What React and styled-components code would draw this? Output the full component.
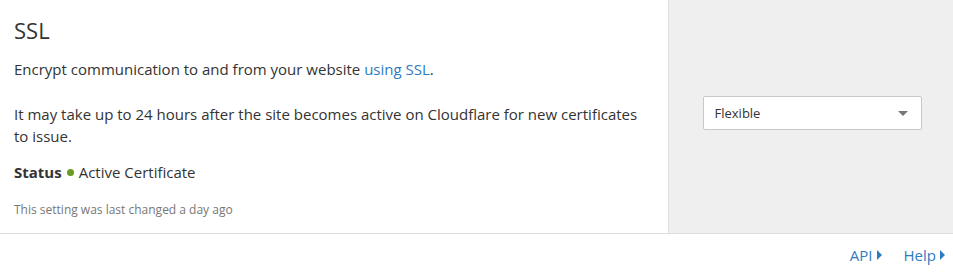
import React from 'react';
import styled, { createGlobalStyle } from 'styled-components';

const GlobalStyle = createGlobalStyle`
  body {
    margin: 0;
    background: #fff;
    font-family: "Open Sans", "Liberation Sans", sans-serif;
    color: #333;
  }
`;

const Card = styled.div`
  width: 953px;
`;

const Body = styled.div`
  display: flex;
  border-bottom: 1px solid #dedede;
  height: 233px;
`;

const Main = styled.div`
  width: 668px;
  padding: 15px 14px 0;
  box-sizing: border-box;
`;

const Title = styled.h2`
  margin: 0 0 13px;
  font-size: 22px;
  font-weight: 400;
  line-height: 30px;
  color: #333;
`;

const Text = styled.p`
  margin: 0 0 ${p => p.gap || 14}px;
  font-size: 15px;
  line-height: 22px;
  color: #333;
  max-width: 640px;
`;

const Link = styled.a`
  color: #2f7bbf;
  text-decoration: none;
`;

const Status = styled.div`
  display: flex;
  align-items: center;
  font-size: 15px;
  line-height: 22px;
  margin-bottom: 18px;

  strong {
    font-weight: 700;
  }
`;

const Dot = styled.span`
  width: 7px;
  height: 7px;
  border-radius: 50%;
  background: #6a9a20;
  margin: 0 5px 0 5px;
`;

const Note = styled.div`
  font-size: 12px;
  line-height: 18px;
  color: #777;
`;

const Side = styled.div`
  flex: 1;
  background: #efefef;
  border-left: 1px solid #dedede;
  display: flex;
  align-items: center;
  justify-content: center;
  padding-bottom: 7px;
  padding-left: 2px;
`;

const Select = styled.div`
  width: 219px;
  height: 34px;
  box-sizing: border-box;
  background: #fff;
  border: 1px solid #c8c8c8;
  border-radius: 2px;
  display: flex;
  align-items: center;
  justify-content: space-between;
  padding: 0 13px 0 11px;
  font-size: 13px;
  color: #333;
`;

const Caret = styled.span`
  width: 0;
  height: 0;
  border-left: 5px solid transparent;
  border-right: 5px solid transparent;
  border-top: 5px solid #777;
`;

const Footer = styled.div`
  height: 42px;
  display: flex;
  align-items: center;
  justify-content: flex-end;
  gap: 22px;
  padding-right: 8px;
`;

const FootLink = styled.a`
  display: flex;
  align-items: center;
  gap: 4px;
  color: #2f7bbf;
  font-size: 15px;
  text-decoration: none;
`;

const Arrow = styled.span`
  width: 0;
  height: 0;
  border-top: 5px solid transparent;
  border-bottom: 5px solid transparent;
  border-left: 5px solid #2f7bbf;
`;

export default function App() {
  return (
    <Card>
      <GlobalStyle />
      <Body>
        <Main>
          <Title>SSL</Title>
          <Text gap={23}>
            Encrypt communication to and from your website <Link href="#">using SSL</Link>.
          </Text>
          <Text>
            It may take up to 24 hours after the site becomes active on Cloudflare for new certificates to issue.
          </Text>
          <Status>
            <strong>Status</strong>
            <Dot />
            Active Certificate
          </Status>
          <Note>This setting was last changed a day ago</Note>
        </Main>
        <Side>
          <Select>
            Flexible
            <Caret />
          </Select>
        </Side>
      </Body>
      <Footer>
        <FootLink href="#">API <Arrow /></FootLink>
        <FootLink href="#">Help <Arrow /></FootLink>
      </Footer>
    </Card>
  );
}
